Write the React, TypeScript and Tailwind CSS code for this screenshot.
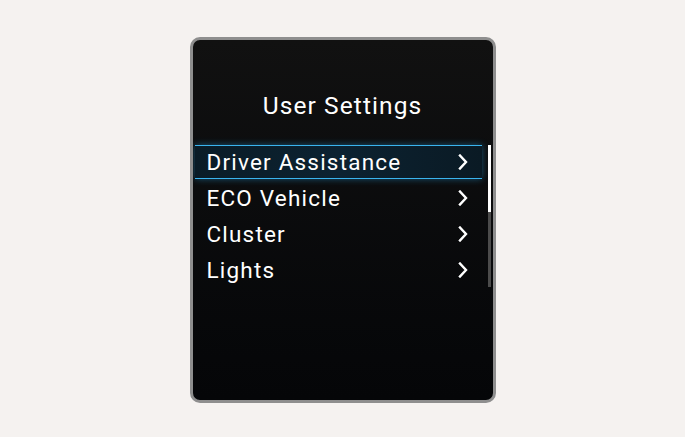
const items = ["Driver Assistance", "ECO Vehicle", "Cluster", "Lights"];

const Chevron = () => (
  <svg width="10" height="16" viewBox="0 0 10 16" fill="none" className="shrink-0">
    <path d="M2 1.5 L8 8 L2 14.5" stroke="white" strokeWidth="2.4" strokeLinecap="square" strokeLinejoin="miter" />
  </svg>
);

export default function App() {
  return (
    <div className="w-[685px] h-[437px] bg-[#f5f2f0] flex items-start justify-center pt-[37px] font-['Roboto',sans-serif]">
      <div className="w-[306px] h-[366px] rounded-[10px] border-[3px] border-[#8e8e8e] bg-gradient-to-b from-[#111111] to-[#050608] overflow-hidden flex flex-col">
        <div className="h-[105px] pt-[53px] flex justify-center">
          <span className="text-white text-[24.5px] leading-[26px] tracking-[1.1px]">User Settings</span>
        </div>
        <div className="flex pl-[2px] pr-[2px]">
          <div className="flex-1 flex flex-col">
            {items.map((label, i) => (
              <div
                key={label}
                className={
                  i === 0
                    ? "h-[34px] flex items-center justify-between pl-[12px] pr-[14px] bg-gradient-to-r from-[#0a1c27] via-[#0c2231] to-[#0a1a24] border-y border-[#3ab4ee] shadow-[0_0_7px_rgba(40,170,240,0.45)] mb-[1px]"
                    : "h-[36px] flex items-center justify-between pl-[12px] pr-[14px]"
                }
              >
                <span className="text-white text-[22.5px] tracking-[1.2px] leading-none">{label}</span>
                <Chevron />
              </div>
            ))}
          </div>
          <div className="w-[3px] h-[142px] bg-[#4b4b4b] ml-[6px] flex flex-col">
            <div className="h-[67px] bg-white" />
          </div>
        </div>
      </div>
    </div>
  );
}
